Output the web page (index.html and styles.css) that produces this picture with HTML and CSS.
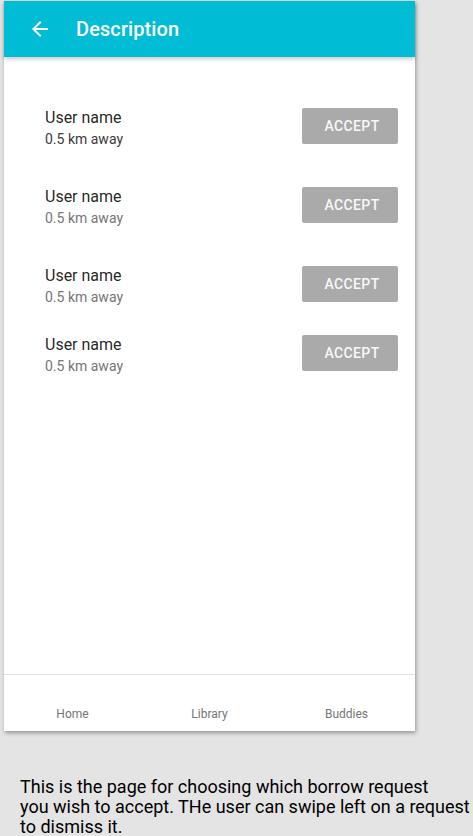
FILE: index.html
```html
<!DOCTYPE html>
<html>
<head>
<meta charset="utf-8">
<link rel="stylesheet" href="styles.css">
</head>
<body>
<div class="page">
  <div class="phone">
    <header class="appbar">
      <svg class="back" viewBox="0 0 24 24" width="24" height="24"><path d="M20 11H7.83l5.59-5.59L12 4l-8 8 8 8 1.41-1.41L7.83 13H20v-2z" fill="#fff"/></svg>
      <h1 class="title">Description</h1>
    </header>
    <main class="content">
      <div class="row">
        <div class="info"><div class="name">User name</div><div class="dist dist-dark">0.5 km away</div></div>
        <button class="accept">ACCEPT</button>
      </div>
      <div class="row">
        <div class="info"><div class="name">User name</div><div class="dist">0.5 km away</div></div>
        <button class="accept">ACCEPT</button>
      </div>
      <div class="row">
        <div class="info"><div class="name">User name</div><div class="dist">0.5 km away</div></div>
        <button class="accept">ACCEPT</button>
      </div>
      <div class="row row-tight">
        <div class="info"><div class="name">User name</div><div class="dist">0.5 km away</div></div>
        <button class="accept">ACCEPT</button>
      </div>
    </main>
    <nav class="bottomnav">
      <span class="tab">Home</span>
      <span class="tab">Library</span>
      <span class="tab">Buddies</span>
    </nav>
  </div>
  <p class="caption">This is the page for choosing which borrow request<br>you wish to accept. THe user can swipe left on a request<br>to dismiss it.</p>
</div>
</body>
</html>
```
FILE: styles.css
```css
html, body {
  margin: 0;
  padding: 0;
  background: #e4e4e4;
  font-family: Roboto, "Noto Sans", sans-serif;
  overflow: hidden;
}
.page {
  padding: 1px 0 0 4px;
}
.phone {
  width: 411px;
  height: 730px;
  background: #fff;
  display: flex;
  flex-direction: column;
  box-shadow: 1px 2px 4px rgba(0, 0, 0, 0.35);
}
.appbar {
  height: 56px;
  background: #00bcd4;
  display: flex;
  align-items: center;
  padding-left: 24px;
  gap: 24px;
  box-shadow: 0 2px 4px rgba(0, 0, 0, 0.22);
  position: relative;
  z-index: 1;
}
.back {
  display: block;
}
.title {
  margin: 0;
  color: #fff;
  font-size: 20px;
  font-weight: 500;
  letter-spacing: 0.1px;
}
.content {
  flex: 1;
  padding: 51px 17px 0 41px;
  display: flex;
  flex-direction: column;
  gap: 43px;
}
.row {
  height: 36px;
  display: flex;
  align-items: center;
  justify-content: space-between;
}
.row-tight {
  margin-top: -10px;
}
.info {
  margin-top: 5px;
}
.name {
  font-size: 16px;
  line-height: 21px;
  color: rgba(0, 0, 0, 0.87);
}
.dist {
  font-size: 14px;
  line-height: 22px;
  color: #757575;
}
.dist-dark {
  color: #3a3a3a;
}
.accept {
  width: 96px;
  height: 36px;
  border: none;
  border-radius: 2px;
  background: #aaaaaa;
  color: #f8f8f8;
  font-family: Roboto, sans-serif;
  font-size: 14px;
  font-weight: 500;
  letter-spacing: 0.4px;
  padding: 0 0 0 4px;
}
.bottomnav {
  border-top: 1px solid #e0e0e0;
  display: grid;
  grid-template-columns: 1fr 1fr 1fr;
  padding-top: 31px;
  box-sizing: border-box;
  height: 57px;
}
.tab {
  text-align: center;
  font-size: 12px;
  line-height: 16px;
  color: #757575;
}
.caption {
  margin: 46px 0 0 16px;
  font-size: 18px;
  line-height: 20px;
  color: #000;
  white-space: nowrap;
}
```
